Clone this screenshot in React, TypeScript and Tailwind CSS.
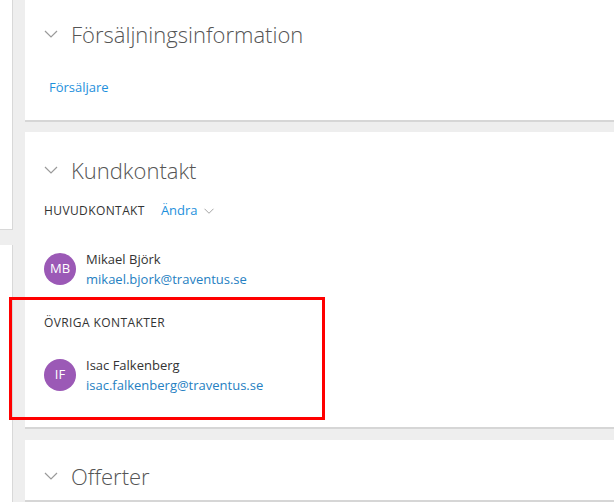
import type { ReactNode } from 'react';

const font = { fontFamily: '"Open Sans", "Noto Sans", sans-serif' };

function Chevron({ className = '' }: { className?: string }) {
  return (
    <svg width="14" height="8" viewBox="0 0 14 8" className={className} fill="none">
      <path d="M1 1l6 6 6-6" stroke="#9a9a9a" strokeWidth="1.2" />
    </svg>
  );
}

function Card({ children, className = '' }: { children: ReactNode; className?: string }) {
  return (
    <section className={`bg-white border-b-2 border-[#d6d6d6] pl-[19px] ${className}`}>
      {children}
    </section>
  );
}

function Heading({ title, className = '' }: { title: string; className?: string }) {
  return (
    <div className={`flex h-[40px] items-center ${className}`}>
      <Chevron />
      <h2 className="ml-[13px] text-[22px] font-light leading-none text-[#555]">{title}</h2>
    </div>
  );
}

function Contact({ initials, name, email, className = '' }: { initials: string; name: string; email: string; className?: string }) {
  return (
    <div className={`flex items-center ${className}`}>
      <span className="flex h-[32px] w-[32px] items-center justify-center rounded-full bg-[#9b59b6] text-[13px] font-medium text-white">
        {initials}
      </span>
      <div className="ml-[10px] text-[13px] leading-[20px]">
        <div className="text-[#333]">{name}</div>
        <div className="text-[#2580c2]">{email}</div>
      </div>
    </div>
  );
}

export default function App() {
  return (
    <div className="relative flex h-[502px] w-full overflow-hidden bg-[#eeeeee]" style={font}>
      <aside className="flex w-[13px] shrink-0 flex-col gap-[15px]">
        <div className="h-[230px] border-r border-b border-[#d8d8d8] bg-white" />
        <div className="flex-1 border-r border-[#d8d8d8] bg-white" />
      </aside>

      <main className="ml-[12px] flex flex-1 flex-col gap-[10px]">
        <Card className="h-[122px] pt-[14px]">
          <Heading title="Försäljningsinformation" />
          <a className="mt-[24px] ml-[5px] flex h-[20px] items-center text-[13px] text-[#1e90dc]">Försäljare</a>
        </Card>

        <Card className="h-[297px] pt-[18px]">
          <Heading title="Kundkontakt" />
          <div className="mt-[11px] flex h-[20px] items-center text-[12px]">
            <span className="font-medium tracking-[0.4px] text-[#333]">HUVUDKONTAKT</span>
            <span className="ml-[16px] flex items-center text-[13px] text-[#1e90dc]">
              Ändra
              <Chevron className="ml-[4px] scale-75" />
            </span>
          </div>
          <Contact className="mt-[28px]" initials="MB" name="Mikael Björk" email="mikael.bjork@traventus.se" />
          <div className="mt-[24px] flex h-[20px] items-center text-[12px] font-medium tracking-[0.4px] text-[#333]">
            ÖVRIGA KONTAKTER
          </div>
          <Contact className="mt-[22px]" initials="IF" name="Isac Falkenberg" email="isac.falkenberg@traventus.se" />
        </Card>

        <Card className="mt-[1px] flex-1 pt-[16px]">
          <Heading title="Offerter" />
        </Card>
      </main>

      <div className="absolute left-[9px] top-[297px] h-[123px] w-[316px] border-[3px] border-[#ff0000]" />
    </div>
  );
}
